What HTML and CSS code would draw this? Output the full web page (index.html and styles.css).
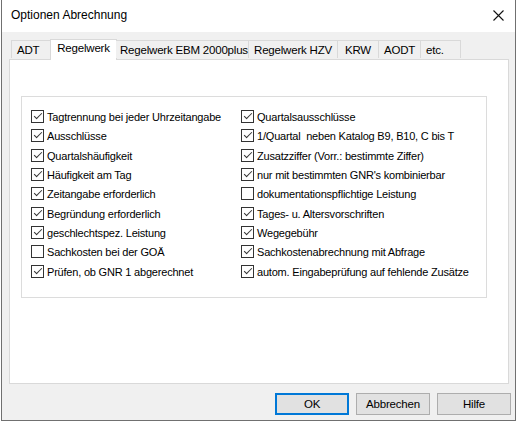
FILE: index.html
```html
<!DOCTYPE html>
<html lang="de">
<head>
<meta charset="utf-8">
<title>Optionen Abrechnung</title>
<link rel="stylesheet" href="styles.css">
</head>
<body>
<div class="window">
  <div class="titlebar">
    <span class="title">Optionen Abrechnung</span>
    <span class="close"><svg width="11" height="11" viewBox="0 0 11 11"><path d="M0.5 0.5 L10.5 10.5 M10.5 0.5 L0.5 10.5" stroke="#111" stroke-width="1.1" fill="none"/></svg></span>
  </div>
  <div class="client">
    <div class="tabs">
      <div class="tab t1">ADT</div>
      <div class="tab active t2">Regelwerk</div>
      <div class="tab t3">Regelwerk EBM 2000plus</div>
      <div class="tab t4">Regelwerk HZV</div>
      <div class="tab t5">KRW</div>
      <div class="tab t6">AODT</div>
      <div class="tab t7">etc.</div>
    </div>
    <div class="panel">
      <div class="group">
        <div class="col">
          <label class="row"><span class="cb on"></span>Tagtrennung bei jeder Uhrzeitangabe</label>
          <label class="row"><span class="cb on"></span>Ausschlüsse</label>
          <label class="row"><span class="cb on"></span>Quartalshäufigkeit</label>
          <label class="row"><span class="cb on"></span>Häufigkeit am Tag</label>
          <label class="row"><span class="cb on"></span>Zeitangabe erforderlich</label>
          <label class="row"><span class="cb on"></span>Begründung erforderlich</label>
          <label class="row"><span class="cb on"></span>geschlechtspez. Leistung</label>
          <label class="row"><span class="cb"></span>Sachkosten bei der GOÄ</label>
          <label class="row"><span class="cb on"></span>Prüfen, ob GNR 1 abgerechnet</label>
        </div>
        <div class="col col2">
          <label class="row"><span class="cb on"></span>Quartalsausschlüsse</label>
          <label class="row"><span class="cb on"></span>1/Quartal&nbsp; neben Katalog B9, B10, C bis T</label>
          <label class="row"><span class="cb on"></span>Zusatzziffer (Vorr.: bestimmte Ziffer)</label>
          <label class="row"><span class="cb on"></span>nur mit bestimmten GNR's kombinierbar</label>
          <label class="row"><span class="cb"></span>dokumentationspflichtige Leistung</label>
          <label class="row"><span class="cb on"></span>Tages- u. Altersvorschriften</label>
          <label class="row"><span class="cb on"></span>Wegegebühr</label>
          <label class="row"><span class="cb on"></span>Sachkostenabrechnung mit Abfrage</label>
          <label class="row"><span class="cb on"></span>autom. Eingabeprüfung auf fehlende Zusätze</label>
        </div>
      </div>
    </div>
    <div class="buttons">
      <button class="btn default">OK</button>
      <button class="btn">Abbrechen</button>
      <button class="btn">Hilfe</button>
    </div>
  </div>
</div>
</body>
</html>
```
FILE: styles.css
```css
html, body {
  margin: 0;
  padding: 0;
  background: #ffffff;
}
body {
  width: 518px;
  height: 423px;
  overflow: hidden;
  font-family: "Liberation Sans", Arial, sans-serif;
  font-size: 11px;
  letter-spacing: -0.2px;
  color: #000;
}
.window {
  margin-left: 1px;
  width: 513px;
  height: 420px;
  border-left: 1px solid #707070;
  border-right: 1px solid #707070;
  border-bottom: 1px solid #707070;
  background: #f0f0f0;
  display: flex;
  flex-direction: column;
}
.titlebar {
  height: 32px;
  background: #ffffff;
  display: flex;
  align-items: center;
  justify-content: space-between;
  padding-left: 9px;
  padding-right: 9px;
  flex: none;
}
.title {
  font-size: 12px;
  letter-spacing: 0;
  position: relative;
  top: -1px;
}
.close {
  display: flex;
  width: 11px;
  height: 11px;
  margin-right: 2px;
  position: relative;
  top: -1px;
}
.client {
  flex: 1;
  padding: 7px 7px 0 7px;
  display: flex;
  flex-direction: column;
}
.tabs {
  display: flex;
  align-items: flex-end;
  height: 20px;
  padding-left: 2px;
  position: relative;
  z-index: 1;
}
.tab {
  height: 18px;
  box-sizing: border-box;
  border: 1px solid #d9d9d9;
  border-bottom: none;
  border-left: none;
  background: #f0f0f0;
  padding: 0 4px;
  line-height: 18px;
  white-space: nowrap;
  margin-bottom: 1px;
  text-align: center;
  font-size: 11.5px;
}
.tab.t1 { border-left: 1px solid #d9d9d9; width: 40px; padding-left: 5px; text-align: left; }
.tab.t2 { width: 66px; }
.tab.t3 { width: 133px; }
.tab.t4 { width: 89px; }
.tab.t5 { width: 41px; }
.tab.t6 { width: 42px; }
.tab.t7 { width: 40px; text-align: left; padding-left: 5px; }
.tab.active {
  height: 21px;
  background: #ffffff;
  border-left: 1px solid #d9d9d9;
  margin-left: -1px;
  margin-bottom: -1px;
  line-height: 17px;
  width: 67px;
  margin-right: -1px;
}
.tab.active + .tab { border-left: none; }
.panel {
  width: 500px;
  height: 325px;
  box-sizing: border-box;
  border: 1px solid #d9d9d9;
  background: #ffffff;
  padding: 36px 0 0 11px;
}
.group {
  width: 466px;
  height: 202px;
  box-sizing: border-box;
  border: 1px solid #dcdcdc;
  display: flex;
  padding: 13px 0 0 9px;
}
.col {
  width: 210px;
  display: flex;
  flex-direction: column;
}
.col2 { width: 240px; }
.row {
  height: 19.35px;
  display: flex;
  align-items: flex-start;
  white-space: nowrap;
  color: #000;
  line-height: 14px;
}
.cb {
  width: 13px;
  height: 13px;
  box-sizing: border-box;
  border: 1px solid #333333;
  background: #ffffff;
  margin-right: 3px;
  flex: none;
  position: relative;
}
.cb.on::after {
  content: "";
  position: absolute;
  left: 2px;
  top: 2px;
  width: 7px;
  height: 3px;
  border-left: 1px solid #333;
  border-bottom: 1px solid #333;
  transform: rotate(-45deg);
}
.buttons {
  display: flex;
  justify-content: flex-end;
  gap: 7px;
  padding-top: 9px;
  margin-right: -3px;
}
.btn {
  width: 74px;
  height: 22px;
  box-sizing: border-box;
  border: 1px solid #adadad;
  background: #e1e1e1;
  font-family: inherit;
  font-size: 11.5px;
  letter-spacing: -0.2px;
  color: #000;
  padding: 0;
  margin: 0;
}
.btn.default {
  border: 2px solid #0078d7;
}
```
